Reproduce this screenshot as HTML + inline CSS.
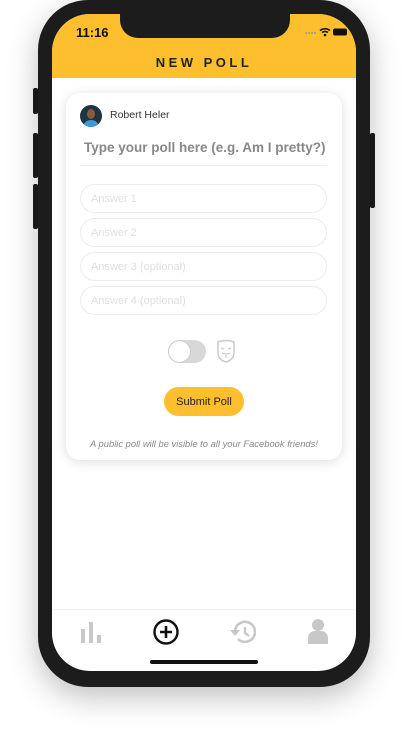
<!DOCTYPE html>
<html><head><meta charset="utf-8"><style>
*{margin:0;padding:0;box-sizing:border-box}
body{width:412px;height:731px;background:#fff;position:relative;overflow:hidden;font-family:"Liberation Sans",sans-serif}
.phone{position:absolute;left:38px;top:0;width:332px;height:687px;background:#1c1c1c;border-radius:50px;box-shadow:0 10px 30px rgba(0,0,0,.25)}
.btn{position:absolute;background:#1c1c1c;width:5px;border-radius:2px}
.screen{position:absolute;left:52px;top:14px;width:304px;height:657px;background:#fff;border-radius:38px;overflow:hidden}
.hdr{position:absolute;left:0;top:0;width:304px;height:64px;background:#fdbf2d}
.notch{position:absolute;left:68px;top:0;width:170px;height:24px;background:#1c1c1c;border-radius:0 0 18px 18px}
.time{position:absolute;left:24px;top:11px;font-size:13px;font-weight:bold;color:#111}
.title{position:absolute;left:0;top:41px;width:304px;text-align:center;font-size:13px;font-weight:bold;letter-spacing:3.5px;color:#222}
.card{position:absolute;left:66px;top:93px;width:276px;height:367px;background:#fff;border-radius:14px;box-shadow:0 2px 12px rgba(0,0,0,.13)}
.in{position:absolute;left:14px;width:247px;height:29px;border:1px solid #ececec;border-radius:15px;font-size:11px;color:#e0e0e0;padding:8px 10px}
</style></head><body>
<div class="btn" style="left:33px;top:88px;height:26px"></div>
<div class="btn" style="left:33px;top:133px;height:45px"></div>
<div class="btn" style="left:33px;top:184px;height:45px"></div>
<div class="btn" style="left:370px;top:133px;height:75px"></div>
<div class="phone"></div>
<div class="screen">
 <div class="hdr"></div>
 <div class="notch"></div>
 <div class="time">11:16</div>
 <svg style="position:absolute;left:252px;top:12px" width="44" height="12" viewBox="0 0 44 12"><g fill="#999"><circle cx="2" cy="7" r="1"/><circle cx="5" cy="7" r="1"/><circle cx="8" cy="7" r="1"/><circle cx="11" cy="7" r="1"/></g><path d="M16 4.5a8 8 0 0 1 10 0M18 6.5a5 5 0 0 1 6 0" stroke="#111" stroke-width="1.6" fill="none"/><circle cx="21" cy="9" r="1.3" fill="#111"/><rect x="29" y="2.5" width="14" height="7" rx="2" fill="#111"/></svg>
 <div class="title">NEW POLL</div>
 <div style="position:absolute;left:0;top:595px;width:304px;border-top:1px solid #f0f0f0"></div>
 <svg style="position:absolute;left:29px;top:607px" width="20" height="22"><rect x="0" y="8" width="4" height="14" fill="#c8c8c8"/><rect x="8" y="1" width="4" height="21" fill="#c8c8c8"/><rect x="16" y="14" width="4" height="8" fill="#c8c8c8"/></svg>
 <svg style="position:absolute;left:101px;top:605px" width="26" height="26"><circle cx="13" cy="13" r="11.5" stroke="#111" stroke-width="2.4" fill="none"/><path d="M13 7v12M7 13h12" stroke="#111" stroke-width="2.6"/></svg>
 <svg style="position:absolute;left:176px;top:605px" width="28" height="26"><path d="M7 13a10 10 0 1 1 3 7" stroke="#c8c8c8" stroke-width="2.6" fill="none"/><path d="M2 11h10l-5 6z" fill="#c8c8c8"/><path d="M17 8v6l4 3" stroke="#c8c8c8" stroke-width="2.4" fill="none"/></svg>
 <svg style="position:absolute;left:256px;top:604px" width="20" height="26"><circle cx="10" cy="7" r="6" fill="#c8c8c8"/><path d="M0 26v-6a7 7 0 0 1 7-7h6a7 7 0 0 1 7 7v6z" fill="#c8c8c8"/></svg>
 <div style="position:absolute;left:98px;top:646px;width:108px;height:4px;background:#111;border-radius:2px"></div>
</div>
<div class="card">
 <div style="position:absolute;left:14px;top:12px;width:22px;height:22px;border-radius:50%;background:#1f3340;overflow:hidden"><div style="position:absolute;left:4px;top:15px;width:14px;height:10px;border-radius:50%;background:#3a9ad9"></div><div style="position:absolute;left:7px;top:4px;width:8px;height:10px;border-radius:50%;background:#8a5a3c"></div></div>
 <div style="position:absolute;left:44px;top:16px;font-size:10.5px;color:#333">Robert Heler</div>
 <div style="position:absolute;left:18px;top:47px;font-size:13.5px;font-weight:bold;color:#888">Type your poll here (e.g. Am I pretty?)</div>
 <div style="position:absolute;left:14px;top:72px;width:247px;border-top:1px solid #eee"></div>
 <div class="in" style="top:91px">Answer 1</div>
 <div class="in" style="top:125px">Answer 2</div>
 <div class="in" style="top:159px">Answer 3 (optional)</div>
 <div class="in" style="top:193px">Answer 4 (optional)</div>
 <div style="position:absolute;left:102px;top:247px;width:38px;height:23px;border-radius:12px;background:#d8d8d8"></div>
 <div style="position:absolute;left:102px;top:247px;width:23px;height:23px;border-radius:50%;background:#fff;border:1px solid #ccc"></div>
 <svg style="position:absolute;left:150px;top:246px" width="20" height="24" viewBox="0 0 20 24"><path d="M2 3Q10 0 18 3V13Q18 21 10 23Q2 21 2 13Z" stroke="#ccc" stroke-width="1.5" fill="none"/><path d="M5 9l3 1M15 9l-3 1M6 14q4 2 8 0M10 16v3" stroke="#ccc" stroke-width="1.3" fill="none"/></svg>
 <div style="position:absolute;left:98px;top:294px;width:80px;height:29px;border-radius:15px;background:#fdbf2d;font-size:11px;color:#222;display:flex;align-items:center;justify-content:center">Submit Poll</div>
 <div style="position:absolute;left:0;top:345px;width:276px;text-align:center;font-size:9.4px;font-style:italic;color:#888">A public poll will be visible to all your Facebook friends!</div>
</div>
</body></html>
